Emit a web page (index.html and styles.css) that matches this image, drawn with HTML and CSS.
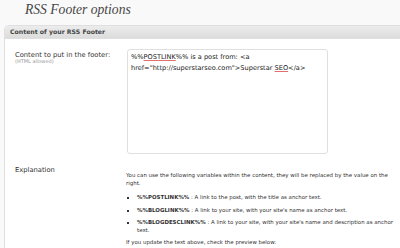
FILE: index.html
```html
<!DOCTYPE html>
<html>
<head>
<meta charset="utf-8">
<link rel="stylesheet" href="styles.css">
</head>
<body>
<div class="wrap">
  <h2 class="title">RSS Footer options</h2>
  <div class="postbox">
    <h3 class="hndle">Content of your RSS Footer</h3>
    <div class="inside">
      <div class="row">
        <div class="label">
          <div>Content to put in the footer:</div>
          <div class="small">(HTML allowed)</div>
        </div>
        <div class="field">
          <div class="textarea">%%<span class="sp">POSTLINK</span>%% is a post from: &lt;a href="http://superstarseo.com"&gt;Superstar <span class="sp">SEO</span>&lt;/a&gt;</div>
        </div>
      </div>
      <div class="row row-expl">
        <div class="label">Explanation</div>
        <div class="field expl">
          <p>You can use the following variables within the content, they will be replaced by the value on the right.</p>
          <ul>
            <li><b>%%POSTLINK%%</b> : A link to the post, with the title as anchor text.</li>
            <li><b>%%BLOGLINK%%</b> : A link to your site, with your site's name as anchor text.</li>
            <li><b>%%BLOGDESCLINK%%</b> : A link to your site, with your site's name and description as anchor text.</li>
          </ul>
          <p>If you update the text above, check the preview below:</p>
        </div>
      </div>
    </div>
  </div>
</div>
</body>
</html>
```
FILE: styles.css
```css
html, body {
  margin: 0;
  padding: 0;
  background: #f9f9f9;
  overflow: hidden;
  width: 400px;
  height: 248px;
}
.wrap {
  padding-left: 4px;
  font-family: "DejaVu Sans", Verdana, sans-serif;
  color: #333;
}
.title {
  margin: 0;
  padding: 0 0 0 21px;
  height: 25px;
  font-family: "Liberation Serif", Georgia, serif;
  font-style: italic;
  font-weight: normal;
  font-size: 13.6px;
  line-height: 20px;
  color: #464646;
}
.postbox {
  width: 420px;
  border: 1px solid #dfdfdf;
  border-right: none;
  border-radius: 5px 0 0 0;
  background: #fff;
  height: 260px;
  overflow: hidden;
}
.hndle {
  margin: 0;
  height: 12px;
  padding: 0 0 0 5px;
  background: linear-gradient(#ececec, #dcdcdc);
  border-bottom: 1px solid #dfdfdf;
  font-size: 6.2px;
  line-height: 12px;
  font-weight: bold;
  color: #464646;
}
.inside {
  padding: 12px 0 0 10px;
}
.row {
  display: flex;
}
.label {
  width: 112px;
  flex: none;
  font-size: 6.75px;
  line-height: 8px;
  color: #333;
}
.small {
  font-size: 5px;
  line-height: 5px;
  color: #999;
}
.field {
  flex: none;
}
.textarea {
  width: 193px;
  height: 99px;
  border: 1px solid #dfdfdf;
  border-radius: 3px;
  background: #fff;
  padding: 2px 3px;
  font-size: 6.6px;
  line-height: 11px;
  color: #222;
  margin-top: -2px;
}
.sp {
  text-decoration: underline solid #e07070;
  text-decoration-thickness: 0.6px;
  text-underline-offset: 1px;
}
.row-expl {
  margin-top: 12px;
}
.expl {
  width: 272px;
  margin-left: -1px;
  margin-top: 6px;
  font-size: 5.45px;
  line-height: 7.5px;
  color: #333;
}
.expl p {
  margin: 0 0 7px 0;
}
.expl ul {
  margin: 0 0 5px 0;
  padding-left: 11px;
  list-style: square;
}
.expl li {
  margin-bottom: 5px;
}
.expl b {
  color: #333;
}
```
